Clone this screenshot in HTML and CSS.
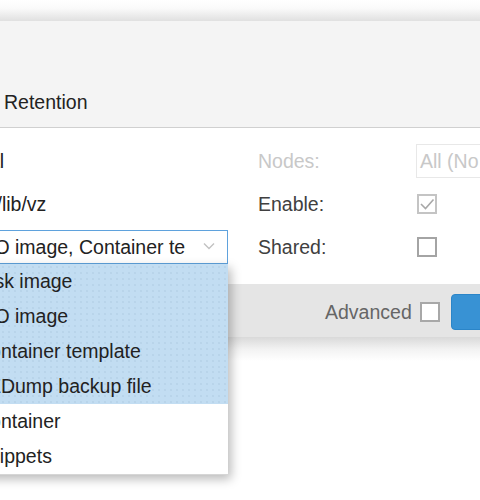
FILE: index.html
```html
<!DOCTYPE html>
<html>
<head>
<meta charset="utf-8">
<link rel="stylesheet" href="styles.css">
</head>
<body>
<div class="window">
  <div class="header"></div>
  <div class="tabbar"><div class="tab">Retention</div></div>
  <div class="form">
    <div class="col col-left">
      <div class="row"><span class="value">local</span></div>
      <div class="row"><span class="value">/var/lib/vz</span></div>
      <div class="row">
        <div class="combo">
          <div class="combo-input">ISO image, Container template, VZDump backup file, Disk image</div>
          <div class="combo-trigger">
            <svg width="12" height="8" viewBox="0 0 12 8"><path d="M1 1.5 L6 6.5 L11 1.5" fill="none" stroke="#c2c2c2" stroke-width="1.4"/></svg>
          </div>
          <ul class="boundlist">
            <li class="item selected">Disk image</li>
            <li class="item selected">ISO image</li>
            <li class="item selected">Container template</li>
            <li class="item selected">VZDump backup file</li>
            <li class="item">Container</li>
            <li class="item">Snippets</li>
          </ul>
        </div>
      </div>
    </div>
    <div class="col col-right">
      <div class="row">
        <span class="label disabled">Nodes:</span>
        <div class="field disabled">All (No restrictions)</div>
      </div>
      <div class="row">
        <span class="label">Enable:</span>
        <span class="checkbox disabled">
          <svg width="16" height="16" viewBox="0 0 16 16"><path d="M2 8 L6.5 12.5 L14.5 3.5" fill="none" stroke="#a8a8a8" stroke-width="1.6"/></svg>
        </span>
      </div>
      <div class="row">
        <span class="label">Shared:</span>
        <span class="checkbox"></span>
      </div>
    </div>
  </div>
  <div class="footer">
    <span class="adv-label">Advanced</span>
    <span class="checkbox white"></span>
    <span class="button">OK</span>
  </div>
  <div class="shadow"></div>
</div>
</body>
</html>
```

FILE: styles.css
```css
html {
  margin: 0;
  padding: 0;
  overflow: hidden;
  background: #ffffff;
}
body {
  margin: 0;
  padding: 0;
  min-height: 500px;
  font-family: "Liberation Sans", Arial, sans-serif;
  font-size: 19.5px;
  color: #222;
}
.window {
  width: 480px;
}
.header {
  height: 21px;
  background: linear-gradient(to bottom, #ffffff 0%, #fafafa 40%, #e0e0e0 100%);
}
.tabbar {
  height: 106px;
  background: #f4f4f4;
  border-bottom: 1px solid #d0d0d0;
  display: flex;
  align-items: flex-end;
}
.tab {
  padding: 0 0 14px 4px;
  line-height: 22px;
  color: #222;
}
.form {
  height: 156px;
  display: flex;
  padding-top: 16px;
  box-sizing: border-box;
}
.col {
  display: flex;
  flex-direction: column;
  gap: 9px;
}
.col-left {
  margin-left: -36px;
  width: 264px;
  flex: none;
}
.col-right {
  margin-left: 30px;
  flex: none;
  width: 260px;
}
.row {
  height: 34px;
  display: flex;
  align-items: center;
}
.value {
  color: #222;
  white-space: nowrap;
}
.combo {
  position: relative;
  width: 100%;
  height: 34px;
  box-sizing: border-box;
  border: 1px solid #5fa2dd;
  background: #fff;
  display: flex;
}
.combo-input {
  width: 221px;
  flex: none;
  box-sizing: border-box;
  padding-left: 11px;
  line-height: 32px;
  white-space: nowrap;
  overflow: hidden;
  color: #222;
}
.combo-trigger {
  flex: 1;
  display: flex;
  align-items: center;
  justify-content: center;
  padding-bottom: 2px;
  padding-left: 4px;
}
.boundlist {
  position: absolute;
  top: calc(100% + 1px);
  left: -1px;
  right: -1px;
  margin: 0;
  padding: 0;
  list-style: none;
  background: #fff;
  border-bottom: 1px solid #d6d6d6;
  box-shadow: 3px 4px 10px rgba(0, 0, 0, 0.28);
  z-index: 5;
}
.item {
  height: 35px;
  line-height: 35px;
  padding-left: 12px;
  white-space: nowrap;
  color: #222;
}
.item.selected {
  background-color: #c2ddf2;
  background-image: radial-gradient(circle, rgba(150, 180, 205, 0.35) 0.6px, transparent 0.9px);
  background-size: 6px 6px;
}
.label {
  width: 158px;
  flex: none;
  color: #404040;
}
.label.disabled {
  color: #c8c8c8;
}
.field {
  width: 120px;
  height: 34px;
  flex: none;
  box-sizing: border-box;
  border: 1px solid #e8e8e8;
  padding-left: 3px;
  line-height: 32px;
  white-space: nowrap;
  overflow: hidden;
}
.field.disabled {
  color: #c8c8c8;
}
.checkbox {
  width: 20px;
  height: 20px;
  flex: none;
  box-sizing: border-box;
  border: 2px solid #a4a4a4;
  margin-left: 1px;
  display: flex;
  align-items: center;
  justify-content: center;
  background: #fff;
}
.checkbox.disabled {
  border-color: #c4c4c4;
}
.footer {
  height: 53px;
  background: #e5e5e5;
  display: flex;
  align-items: center;
  padding-left: 325px;
  padding-top: 3px;
  box-sizing: border-box;
}
.adv-label {
  flex: none;
  color: #666;
  margin-right: 8px;
  white-space: nowrap;
}
.checkbox.white {
  margin-left: 0;
  border-color: #a8a8a8;
}
.button {
  margin-left: 11px;
  width: 90px;
  height: 36px;
  flex: none;
  box-sizing: border-box;
  background: #3892d4;
  border: 1px solid #2b85c8;
  border-radius: 4px;
  color: #fff;
  line-height: 34px;
  text-align: center;
  font-weight: bold;
}
.shadow {
  height: 24px;
  background: linear-gradient(to bottom, #d9d9d9 0%, #f2f2f2 50%, #ffffff 100%);
}
```
